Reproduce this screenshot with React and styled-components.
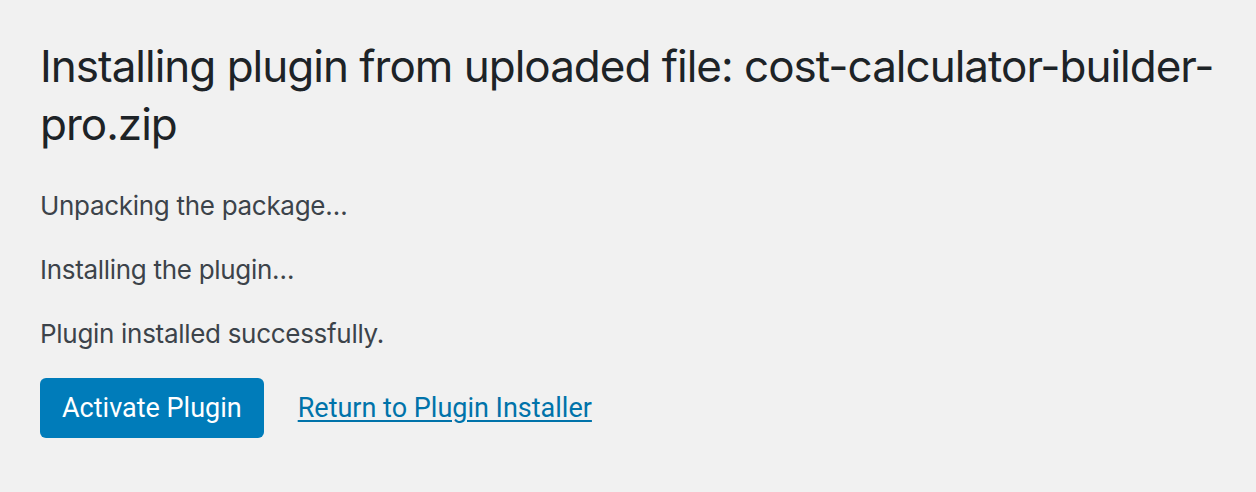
import styled, { createGlobalStyle } from 'styled-components';

const GlobalStyle = createGlobalStyle`
  html, body {
    margin: 0;
    background: #f1f1f1;
  }
  body {
    font-family: Inter, "Noto Sans", sans-serif;
  }
`;

const Wrap = styled.div`
  padding: 37px 20px 40px 40px;
`;

const Title = styled.h1`
  margin: 0 0 21px;
  font-size: 44px;
  line-height: 58px;
  font-weight: 400;
  letter-spacing: -1px;
  color: #1d2327;
`;

const Step = styled.p`
  margin: 0;
  font-size: 26px;
  line-height: 64px;
  letter-spacing: -0.3px;
  color: #3c434a;
`;

const Actions = styled.div`
  display: flex;
  align-items: center;
  gap: 34px;
  margin-top: 12px;
`;

const Button = styled.button`
  background: #007cba;
  color: #fff;
  border: none;
  border-radius: 6px;
  height: 60px;
  padding: 0 22px;
  font-family: Roboto, sans-serif;
  font-size: 27px;
  cursor: pointer;
`;

const Link = styled.a`
  font-family: Roboto, sans-serif;
  font-size: 27px;
  color: #0073aa;
  text-decoration: underline;
  text-underline-offset: 3px;
`;

const steps = [
  'Unpacking the package…',
  'Installing the plugin…',
  'Plugin installed successfully.',
];

const App = () => {
  return (
    <>
      <GlobalStyle />
      <Wrap>
        <Title>Installing plugin from uploaded file: cost-calculator-builder-pro.zip</Title>
        {steps.map((s) => (
          <Step key={s}>{s}</Step>
        ))}
        <Actions>
          <Button>Activate Plugin</Button>
          <Link href="#">Return to Plugin Installer</Link>
        </Actions>
      </Wrap>
    </>
  );
};

export default App;
